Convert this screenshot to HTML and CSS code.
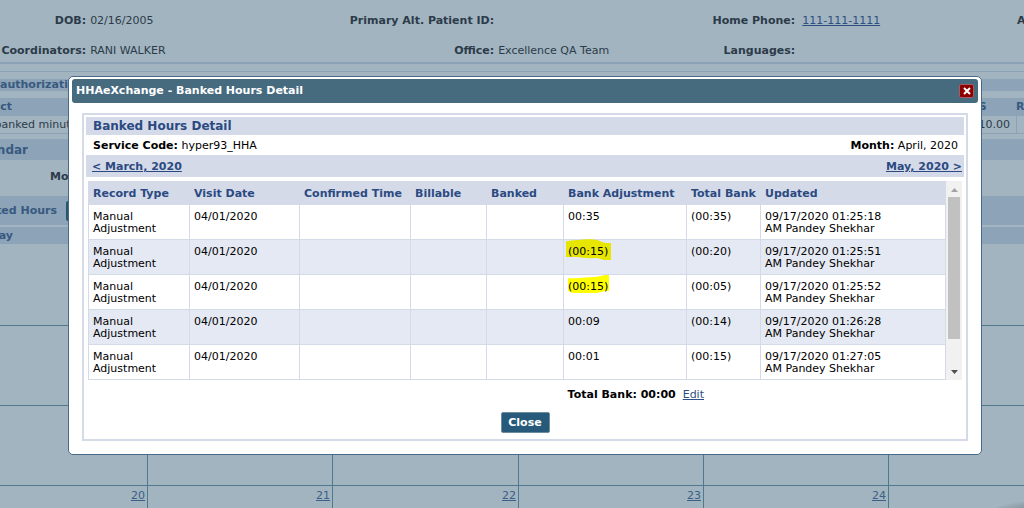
FILE: index.html
```html
<!DOCTYPE html>
<html lang="en">
<head>
<meta charset="utf-8">
<title>HHAeXchange - Banked Hours Detail</title>
<link rel="stylesheet" href="styles.css">
</head>
<body>
<main class="page">
  <section class="patient">
    <b class="label">DOB:</b><span>02/16/2005</span>
    <b class="label">Primary Alt. Patient ID:</b><span></span>
    <b class="label">Home Phone:</b><a class="phone" href="#">111-111-1111</a>
    <b>Address:</b>
    <b class="label">Coordinators:</b><span>RANI WALKER</span>
    <b class="label">Office:</b><span>Excellence QA Team</span>
    <b class="label">Languages:</b><span></span>
    <b></b>
  </section>
  <div class="rule"></div>
  <h2 class="bar bar-auth">authorizations</h2>
  <div class="auth-row auth-head"><span class="clip clip-contract"><span>Contract</span></span><span class="units">UNITS</span><span class="rate">Rate</span></div>
  <div class="auth-row auth-body"><span class="clip clip-minutes"><span>banked minutes</span></span><span class="amount">10.00</span><span class="rate"></span></div>
  <h2 class="bar bar-calendar"><span class="clip clip-calendar"><span>Calendar</span></span></h2>
  <div class="month"><b>Month:</b></div>
  <div class="bar bar-hours"><span class="clip clip-hours"><span>Banked Hours</span></span><button class="view" type="button" aria-label="View"></button></div>
  <div class="bar bar-day"><span class="clip clip-day"><span>Sunday</span></span></div>
  <div class="calendar">
    <div></div><div></div><div></div><div></div><div></div><div></div>
    <div></div><div></div><div></div><div></div><div></div><div></div>
    <div></div><div></div><div></div><div></div><div></div><div></div>
    <div><a href="#">20</a></div><div><a href="#">21</a></div><div><a href="#">22</a></div><div><a href="#">23</a></div><div><a href="#">24</a></div><div></div>
  </div>
</main>
<div class="corner-shade"></div>

<div class="modal" role="dialog" aria-labelledby="modal-title">
  <header class="modal-title">
    <h1 id="modal-title">HHAeXchange - Banked Hours Detail</h1>
    <button class="dismiss" type="button" aria-label="Dismiss">
      <svg width="8" height="8" viewBox="0 0 8 8"><path d="M1 1L7 7M7 1L1 7" stroke="#fff" stroke-width="2"/></svg>
    </button>
  </header>
  <section class="panel">
    <h2 class="panel-title">Banked Hours Detail</h2>
    <div class="summary"><span><b>Service Code:</b> hyper93_HHA</span><span><b>Month:</b> April, 2020</span></div>
    <nav class="months"><a href="#">&lt; March, 2020</a><a href="#">May, 2020 &gt;</a></nav>
    <div class="scroller">
      <table class="hours">
        <colgroup><col class="c-type"><col class="c-date"><col class="c-time"><col class="c-bill"><col class="c-bank"><col class="c-adjust"><col class="c-total"><col></colgroup>
        <thead><tr><th>Record Type</th><th>Visit Date</th><th>Confirmed Time</th><th>Billable</th><th>Banked</th><th>Bank Adjustment</th><th>Total Bank</th><th>Updated</th></tr></thead>
        <tbody>
          <tr><td>Manual Adjustment</td><td>04/01/2020</td><td></td><td></td><td></td><td>00:35</td><td>(00:35)</td><td>09/17/2020 01:25:18<br>AM Pandey Shekhar</td></tr>
          <tr><td>Manual Adjustment</td><td>04/01/2020</td><td></td><td></td><td></td><td><span class="marked"><svg class="marker" width="46" height="22" viewBox="0 0 46 22"><path fill="#e6e600" d="M1 2C5 2 7 1 13 1C20 0 30 0 34 2C37 4 40 4 45 4V21H39C35 21 35 19 29 19C20 20 16 18 8 18H0V3Z"/></svg><span>(00:15)</span></span></td><td>(00:20)</td><td>09/17/2020 01:25:51<br>AM Pandey Shekhar</td></tr>
          <tr><td>Manual Adjustment</td><td>04/01/2020</td><td></td><td></td><td></td><td><span class="marked"><svg class="marker" width="46" height="22" viewBox="0 0 46 22"><path fill="#ffff00" d="M3 4C12 5 19 3 28 3C33 3 35 1 43 1V17C35 17 35 19 28 19H7L2 17V5Z"/></svg><span>(00:15)</span></span></td><td>(00:05)</td><td>09/17/2020 01:25:52<br>AM Pandey Shekhar</td></tr>
          <tr><td>Manual Adjustment</td><td>04/01/2020</td><td></td><td></td><td></td><td>00:09</td><td>(00:14)</td><td>09/17/2020 01:26:28<br>AM Pandey Shekhar</td></tr>
          <tr><td>Manual Adjustment</td><td>04/01/2020</td><td></td><td></td><td></td><td>00:01</td><td>(00:15)</td><td>09/17/2020 01:27:05<br>AM Pandey Shekhar</td></tr>
        </tbody>
      </table>
      <div class="scrollbar" aria-hidden="true">
        <svg width="7" height="16" viewBox="0 0 7 16"><path fill="#a3a3a3" d="M0 11L3.500 7L7 11Z"/></svg>
        <div class="thumb"></div>
        <svg class="down" width="7" height="16" viewBox="0 0 7 16"><path fill="#505050" d="M0 6L3.500 10L7 6Z"/></svg>
      </div>
    </div>
    <div class="total"><b>Total Bank: 00:00</b><a href="#">Edit</a></div>
    <div class="actions"><button class="close" type="button">Close</button></div>
  </section>
</div>
</body>
</html>
```
FILE: styles.css
```css
* { box-sizing: border-box; }
body {
  margin: 0;
  background: #a2b4c0;
  color: #2c3b49;
  font: 11px/12px "DejaVu Sans", Verdana, sans-serif;
}
h1, h2 { margin: 0; font-size: 11px; }
a { color: #2e4f82; }
button { font: inherit; padding: 0; cursor: pointer; }

/* Page behind the dialog */
.page {
  display: flex;
  flex-direction: column;
  height: 100vh;
  overflow: hidden;
}
.page > * { flex: none; }
.patient {
  display: grid;
  grid-template-columns: 87fr 204fr 200fr 150fr 146fr 216fr 7fr;
  column-gap: 4px;
  row-gap: 18px;
  padding: 15px 0 5px;
  white-space: nowrap;
  border-bottom: 2px solid #8ba2b6;
}
.patient > * { min-width: 0; }
.label { display: flex; justify-content: flex-end; }
.phone { padding-left: 3px; }
.rule { height: 8px; border-bottom: 1px solid #8ba2b6; }
.bar {
  display: flex;
  align-items: center;
  background: #8ca3b8;
  color: #38597f;
  font-weight: bold;
}
.bar-auth { height: 12px; margin-top: 7px; }
.clip {
  display: flex;
  justify-content: flex-end;
  overflow: hidden;
  white-space: nowrap;
}
.clip > span { flex: none; }
.clip-contract { width: 12px; }
.clip-minutes { width: 83px; }
.clip-calendar { width: 28px; }
.clip-hours { width: 57px; }
.clip-day { width: 13px; }
.auth-row { display: flex; align-items: center; height: 18px; }
.auth-head {
  margin-top: 7px;
  background: #8ca3b8;
  color: #38597f;
  font-weight: bold;
}
.auth-body { border-bottom: 1px solid #8ba2b6; }
.units { width: 67px; margin-left: auto; }
.rate { flex: none; width: 8px; align-self: stretch; }
.auth-head .rate { display: flex; align-items: center; }
.auth-body .rate { border-left: 1px solid #8ba2b6; }
.amount { margin-left: auto; padding-right: 6px; }
.bar-calendar { height: 21px; margin-top: 5px; font-size: 12px; }
.month { height: 36px; padding: 11px 0 0 50px; }
.bar-hours { height: 29px; gap: 9px; }
.view { width: 60px; height: 20px; border: 0; border-radius: 2px; background: #27566f; }
.bar-day { height: 17px; margin-top: 2px; }
.page > .calendar {
  display: grid;
  flex: 1;
  min-height: 0;
  padding-top: 2px;
  grid-template-columns: 148fr 185fr 186fr 185fr 185fr 135fr;
  grid-template-rows: 80px 80px 80px 1fr;
}
.calendar > div {
  padding: 4px 2px;
  border-right: 1px solid #4f7a8c;
  border-bottom: 1px solid #4f7a8c;
  text-align: right;
}
.calendar > div:nth-child(6n) { border-right: 0; }
.calendar > div:nth-child(n+19) { border-bottom: 0; padding-bottom: 0; }
.calendar a { color: #3b5f85; }
.corner-shade {
  position: fixed;
  right: 0;
  bottom: 0;
  width: 26px;
  height: 6px;
  background: linear-gradient(to bottom right, transparent 30%, #8a98a3);
}

/* Dialog */
.modal {
  position: fixed;
  top: 76px;
  left: 68px;
  right: 42px;
  padding: 2px 3px 13px;
  border: 1px solid #47698a;
  border-radius: 5px;
  background: #fff;
  color: #000;
}
.modal-title {
  display: flex;
  align-items: center;
  justify-content: space-between;
  height: 24px;
  padding: 0 4px;
  border-radius: 3px;
  background: #466b7f;
  color: #fff;
}
.dismiss {
  display: flex;
  align-items: center;
  justify-content: center;
  width: 15px;
  height: 14px;
  border: 1px solid #a85a62;
  border-radius: 2px;
  background: #8d0000;
}
.panel {
  margin: 10px 10px 0;
  padding: 2px;
  border: 2px solid #d5dae8;
}
.panel-title {
  height: 18px;
  padding-left: 7px;
  background: #d5dae8;
  color: #2b4a82;
  font-size: 12px;
  line-height: 18px;
}
.summary, .months { display: flex; justify-content: space-between; }
.summary { padding: 5px 6px 3px 7px; }
.months {
  padding: 6px 2px 4px 6px;
  background: #d5dae8;
  font-weight: bold;
}
.months a { color: #2b4a82; }
.scroller { display: flex; margin: 4px 2px 0; }
.hours {
  flex: 1;
  table-layout: fixed;
  width: 100%;
  border-collapse: separate;
  border-spacing: 0;
  border-left: 1px solid #d5dae8;
}
.c-type { width: 101px; }
.c-date { width: 110px; }
.c-time { width: 111px; }
.c-bill { width: 76px; }
.c-bank { width: 77px; }
.c-adjust { width: 123px; }
.c-total { width: 74px; }
.hours th {
  height: 24px;
  padding: 2px 4px 0;
  background: #d5dae8;
  color: #2b4a82;
  text-align: left;
  white-space: nowrap;
}
.hours td {
  padding: 6px 4px 4px;
  border-right: 1px solid #d5dae8;
  border-bottom: 1px solid #d5dae8;
  vertical-align: top;
}
.hours tbody tr:nth-child(even) { background: #e5e9f3; }
.marked { position: relative; }
.marked > span { position: relative; }
.marker { position: absolute; left: -2px; top: -6px; }
.scrollbar {
  display: flex;
  flex-direction: column;
  align-items: center;
  width: 16px;
  background: #f1f1f1;
}
.thumb { width: 12px; height: 142px; background: #c1c1c1; }
.down { margin-top: auto; }
.total {
  display: flex;
  justify-content: flex-end;
  gap: 7px;
  padding: 9px 260px 0 0;
}
.actions { display: flex; justify-content: center; padding: 11px 0 4px; }
.close {
  width: 49px;
  height: 21px;
  border: 1px solid #6d8c9e;
  border-radius: 2px;
  background: #27597a;
  color: #fff;
  font-weight: bold;
}
```
